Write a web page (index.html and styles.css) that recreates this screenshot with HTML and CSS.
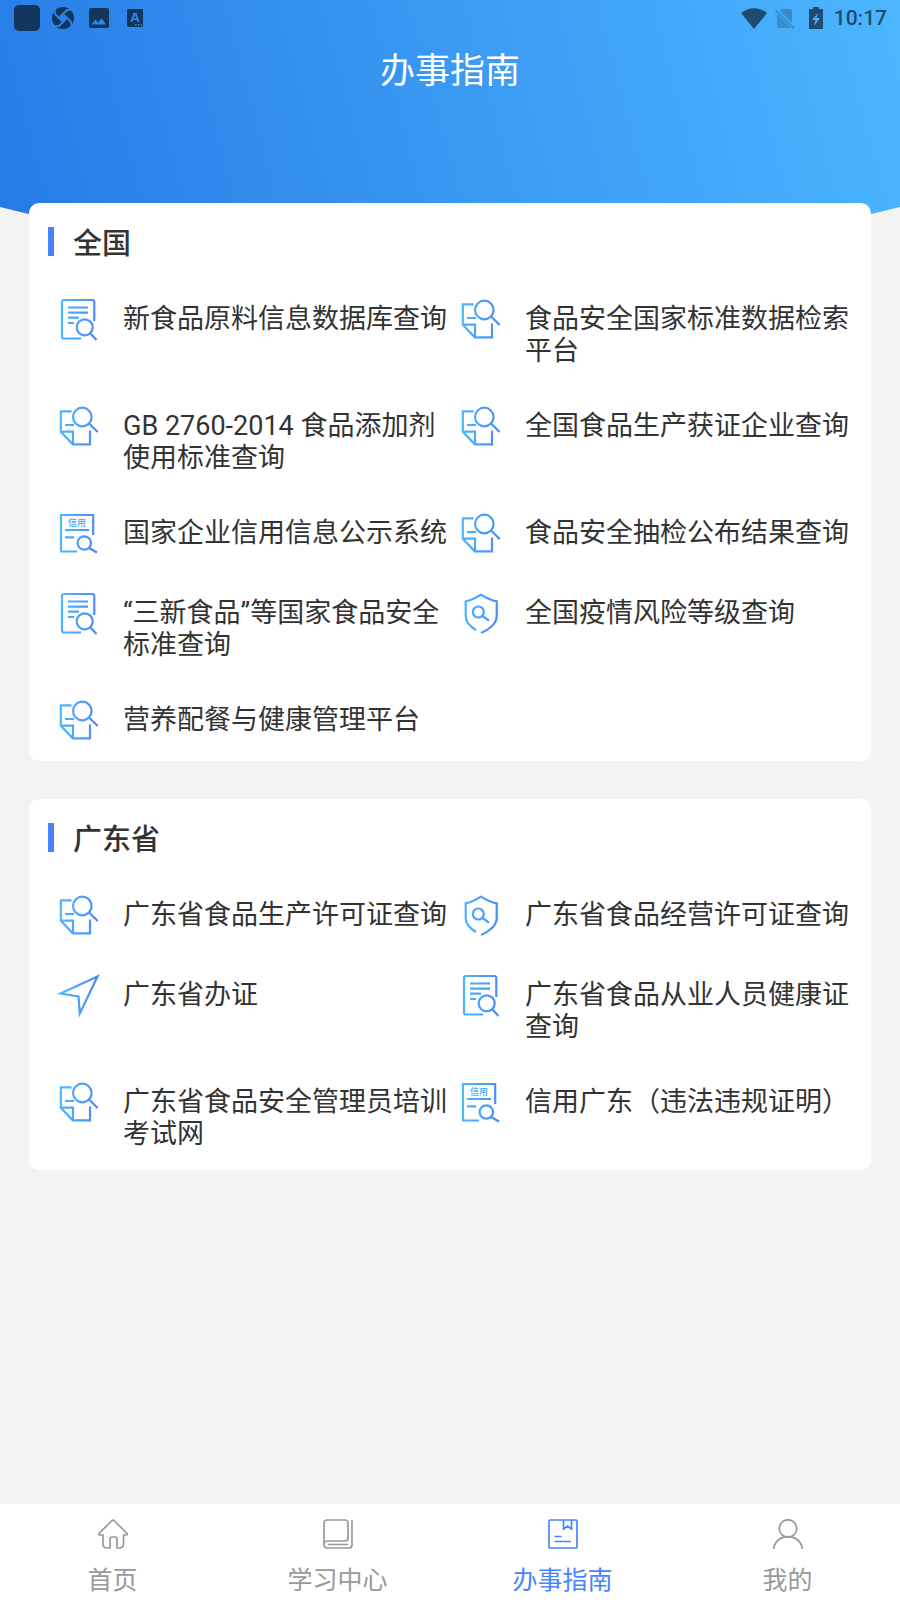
FILE: index.html
```html
<!DOCTYPE html>
<html lang="zh-CN">
<head>
    <meta charset="utf-8">
    <meta name="viewport" content="width=device-width, initial-scale=1">
    <title>办事指南</title>
    <link rel="stylesheet" href="styles.css">
</head>
<body>

<svg class="sprite" width="0" height="0" aria-hidden="true">
    <defs>
        <linearGradient id="blue" gradientUnits="userSpaceOnUse" x1="5" y1="24" x2="42" y2="26">
            <stop offset="0" stop-color="#4cb8ff"/>
            <stop offset="1" stop-color="#4a8afa"/>
        </linearGradient>
    </defs>
    <symbol id="doc" viewBox="0 0 48 48">
        <path d="M26 43.500H9a2 2 0 0 1-2-2V7a2 2 0 0 1 2-2h28.300a2 2 0 0 1 2 2V26M13 12.500h20M13 17.700h20M13 22.700h11M13 28h6M35.500 38.500l6 6.500"/>
        <circle cx="29.700" cy="32.300" r="8"/>
    </symbol>
    <symbol id="search" viewBox="0 0 48 48">
        <path d="M16.500 9.300H5.800v20.400l12 12.600H35V28.500M5.800 29.700H18v12.600M10 23h9M34 21.500l8.700 8.500"/>
        <circle cx="27.300" cy="15" r="9.300"/>
    </symbol>
    <symbol id="credit" viewBox="0 0 48 48">
        <path d="M22 42.500H6V6h32.200V26M10 21h24M10 28.300h9M34 39l8 4.500"/>
        <circle cx="29.300" cy="34" r="6.700"/>
    </symbol>
    <symbol id="shield" viewBox="0 0 48 48">
        <path d="M19 41C13 37.500 8.700 33 8.700 27V12.300C14 11.500 19 9 24 5.700c5 3.300 10 5.800 15.700 6.600V27c0 8-7 13-15.700 17M25.500 27l6.500 4.700"/>
        <circle cx="21.300" cy="23" r="5.500"/>
    </symbol>
    <symbol id="plane" viewBox="0 0 48 48">
        <path d="M42.500 5.500L5.500 22.500l18 3 1.300 17z"/>
    </symbol>
</svg>

<header class="top">
    <div class="status">
        <div class="status-group">
            <svg height="26" viewBox="0 0 26 26"><rect width="26" height="26" rx="5"/></svg>
            <svg height="22" viewBox="0 0 22 22">
                <circle cx="11" cy="11" r="11"/>
                <path class="swirl" d="M11 6.500l4.500 4.500-4.500 4.500L6.500 11z"/>
                <path class="swirl-line" d="M8 10l7-7 4-.5M12 8l7 7 .5 4M14 12l-7 7-4 .5M10 14L3 7l-.5-4"/>
            </svg>
            <svg height="20" viewBox="0 0 20 20"><path fill-rule="evenodd" d="M2 0h16a2 2 0 0 1 2 2v16a2 2 0 0 1-2 2H2a2 2 0 0 1-2-2V2a2 2 0 0 1 2-2zM2.500 16.500h14.500l-4.500-6.500-3 4.500-3-3z"/></svg>
            <svg height="18" viewBox="0 0 16 18"><path fill-rule="evenodd" d="M1 0h14l1 1v16l-1 1H1l-1-1V1zM6.500 4L3.500 13h2l.6-2h3.800l.6 2h2L9.500 4zM8 6l1.300 3.500H6.700zM8 15v1.500h1.500V15zM10.700 15v1.500h1.500V15zM13.400 15v1.500h1.500V15z"/></svg>
        </div>
        <div class="status-group status-right">
            <svg height="21" viewBox="0 0 26 21"><path d="M0 5C8-1.500 18-1.500 26 5L13 21z"/></svg>
            <svg class="faded" height="21" viewBox="0 0 20 21"><path d="M7 1h8a2 2 0 0 1 2 2v12L5 3zM2 6l14 14H4a2 2 0 0 1-2-2z"/><path class="slash" d="M.5 2l18.500 18.500"/></svg>
            <svg height="22" viewBox="0 0 14 22"><path fill-rule="evenodd" d="M4 0h6v2h4v20H0V2h4zM9 6l-6 7h3.500L5 19l6-8H7.500z"/></svg>
            <span class="time">10:17</span>
        </div>
    </div>
    <h1>办事指南</h1>
</header>

<main>
    <section class="card">
        <h2>全国</h2>
        <div class="links">
            <a href="#"><svg class="icon"><use href="#doc"/></svg><span>新食品原料信息数据库查询</span></a>
            <a href="#"><svg class="icon"><use href="#search"/></svg><span>食品安全国家标准数据检索平台</span></a>
            <a href="#"><svg class="icon"><use href="#search"/></svg><span>GB 2760-2014 食品添加剂使用标准查询</span></a>
            <a href="#"><svg class="icon"><use href="#search"/></svg><span>全国食品生产获证企业查询</span></a>
            <a href="#"><svg class="icon"><use href="#credit"/><text x="13" y="17">信用</text></svg><span>国家企业信用信息公示系统</span></a>
            <a href="#"><svg class="icon"><use href="#search"/></svg><span>食品安全抽检公布结果查询</span></a>
            <a href="#"><svg class="icon"><use href="#doc"/></svg><span>“三新食品”等国家食品安全标准查询</span></a>
            <a href="#"><svg class="icon"><use href="#shield"/></svg><span>全国疫情风险等级查询</span></a>
            <a href="#"><svg class="icon"><use href="#search"/></svg><span>营养配餐与健康管理平台</span></a>
        </div>
    </section>

    <section class="card">
        <h2>广东省</h2>
        <div class="links">
            <a href="#"><svg class="icon"><use href="#search"/></svg><span>广东省食品生产许可证查询</span></a>
            <a href="#"><svg class="icon"><use href="#shield"/></svg><span>广东省食品经营许可证查询</span></a>
            <a href="#"><svg class="icon"><use href="#plane"/></svg><span>广东省办证</span></a>
            <a href="#"><svg class="icon"><use href="#doc"/></svg><span>广东省食品从业人员健康证查询</span></a>
            <a href="#"><svg class="icon"><use href="#search"/></svg><span>广东省食品安全管理员培训考试网</span></a>
            <a href="#"><svg class="icon"><use href="#credit"/><text x="13" y="17">信用</text></svg><span>信用广东（违法违规证明）</span></a>
        </div>
    </section>
</main>

<nav class="tabs">
    <a href="#">
        <svg viewBox="0 0 30 30"><path d="M12 29H8.500A3.500 3.500 0 0 1 5 25.500V16H1.500Q.5 15.500 1 14.500L13.500 2Q15 .5 16.500 2L29 14.500Q29.500 15.500 28.500 16H25.500v9.500A3.500 3.500 0 0 1 22 29H19V20a2 2 0 0 0-2-2H14a2 2 0 0 0-2 2z"/></svg>
        <span>首页</span>
    </a>
    <a href="#">
        <svg viewBox="0 0 30 30"><path d="M29 1v25a3 3 0 0 1-3 3H4a3 3 0 0 1-3-3V4a3 3 0 0 1 3-3h18.500A2.500 2.500 0 0 1 25 3.500V19a3 3 0 0 1-3 3H4.500A3.500 3.500 0 0 0 1 25.500M5 25.500h20"/></svg>
        <span>学习中心</span>
    </a>
    <a href="#" class="active">
        <svg viewBox="0 0 30 30"><path d="M2 1h26a1 1 0 0 1 1 1v26a1 1 0 0 1-1 1H2a1 1 0 0 1-1-1V2a1 1 0 0 1 1-1zM15.500 1v9l4-3 4 3V1M6.500 17.500h7M6.500 22.500h16.500"/></svg>
        <span>办事指南</span>
    </a>
    <a href="#">
        <svg viewBox="0 0 30 30"><circle cx="15" cy="9.500" r="8.700"/><path d="M.8 30C2 13.500 28 13.500 29.200 30"/></svg>
        <span>我的</span>
    </a>
</nav>

</body>
</html>
```
FILE: styles.css
```css
* {
    box-sizing: border-box;
}
body {
    margin: 0;
    min-height: 100vh;
    display: flex;
    flex-direction: column;
    background: #f3f3f3;
    color: #333;
    font-family: Roboto, "Noto Sans CJK SC", sans-serif;
}
a {
    color: inherit;
    text-decoration: none;
}
.sprite {
    display: block;
}

/* header */
.top {
    height: 240px;
    background: linear-gradient(75deg, #267be6, #4cb6ff);
    clip-path: polygon(0 0, 100% 0, 100% 207px, 85% 100%, 15% 100%, 0 207px);
}
.status {
    display: flex;
    justify-content: space-between;
    height: 36px;
    padding: 0 13px 0 14px;
    fill: #12365c;
}
.status-group {
    display: flex;
    align-items: center;
    gap: 10px;
}
.status-group svg {
    width: 26px;
}
.status-right {
    gap: 5px;
    fill: #1f4b6e;
}
.swirl {
    fill: #2a82e9;
}
.swirl-line {
    fill: none;
    stroke: #2a82e9;
    stroke-width: 2;
}
.faded {
    opacity: 0.35;
}
.slash {
    stroke: #1f4b6e;
    stroke-width: 2;
}
.time {
    font-size: 21px;
    font-weight: 500;
    color: #1f4b6e;
}
h1 {
    margin: 10px 0 0;
    font-size: 35px;
    line-height: 52px;
    font-weight: 400;
    color: #fff;
    text-align: center;
}

/* cards */
main {
    position: relative;
    flex: 1;
    margin-top: -37px;
    padding: 0 29px;
}
.card {
    margin-bottom: 38px;
    padding: 0 19px 1px;
    background: #fff;
    border-radius: 10px;
}
h2 {
    display: flex;
    align-items: center;
    gap: 19px;
    height: 76px;
    margin: 0;
    font-size: 29px;
    font-weight: 500;
}
h2::before {
    content: "";
    width: 6px;
    height: 29px;
    background: #4984ff;
}
.links {
    display: grid;
    grid-template-columns: 1fr 1fr;
}
.links a {
    display: flex;
    gap: 20px;
    padding: 16px 0 16px 7px;
}
.links span {
    flex: 1;
    padding: 8px 0 3px;
    font-size: 27px;
    line-height: 32px;
}
.icon {
    flex: none;
    width: 48px;
    height: 48px;
    fill: none;
    stroke: url(#blue);
    stroke-width: 2.2;
}
.icon text {
    font-size: 9px;
    font-weight: 500;
    fill: #4ca4fc;
    stroke: none;
}

/* bottom tabs */
.tabs {
    display: grid;
    grid-template-columns: repeat(4, 1fr);
    height: 96px;
    background: #fff;
    color: #999;
}
.tabs a {
    display: flex;
    flex-direction: column;
    align-items: center;
    gap: 14px;
    padding-top: 15px;
    font-size: 25px;
    line-height: 36px;
}
.tabs svg {
    width: 30px;
    height: 30px;
    fill: none;
    stroke: currentColor;
    stroke-width: 1.7;
}
.tabs .active {
    color: #4984ff;
}
```
